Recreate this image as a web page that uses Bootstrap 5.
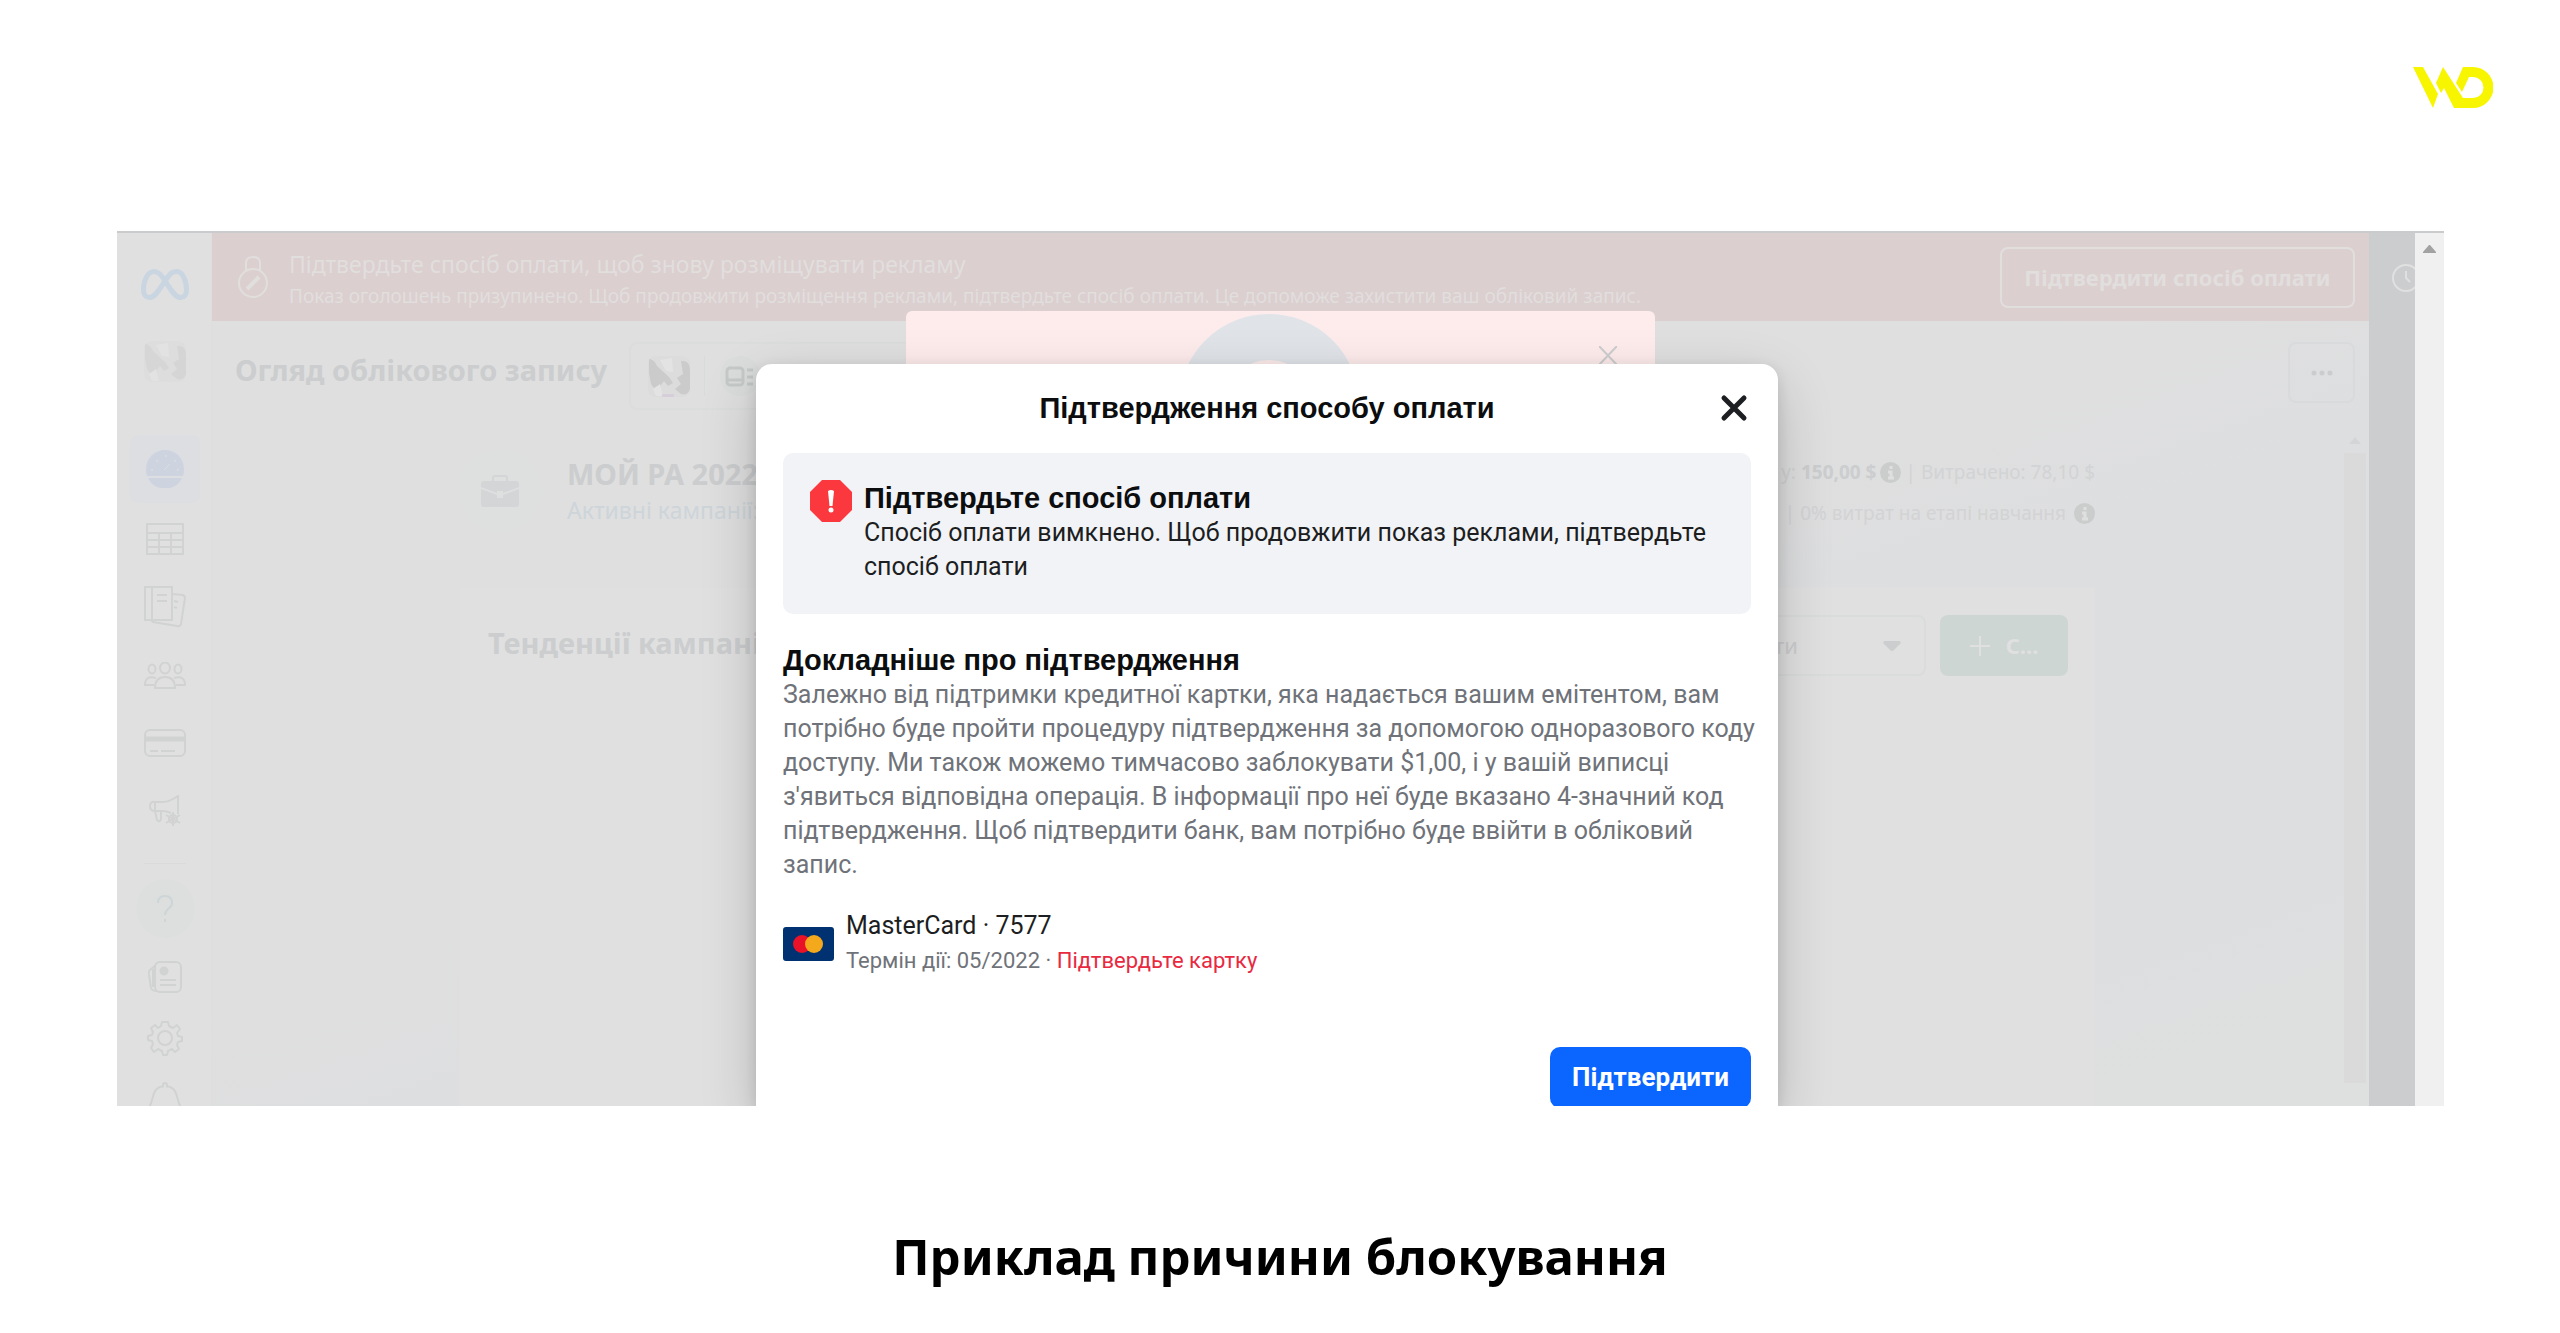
<!DOCTYPE html>
<html lang="uk">
<head>
<meta charset="utf-8">
<meta name="viewport" content="width=device-width, initial-scale=1">
<title>Приклад причини блокування</title>
<link href="https://cdn.jsdelivr.net/npm/bootstrap@5.3.0/dist/css/bootstrap.min.css" rel="stylesheet">
<style>
body{background:#fff;font-family:"Noto Sans",sans-serif;color:#cbcdce}
svg{display:block;flex:none}
.brandbar{padding:67px 67px 0;height:231px}
.shot{margin:0 116px 0 117px;display:grid;grid-template-columns:minmax(0,1fr);overflow:hidden;border-top:2px solid #c9cbcc}
.layer{grid-area:1/1;min-width:0}
.side{width:95px;flex:none;background:#e0e0e0;border-right:1px solid #dedede;padding-left:2px}
.side svg{fill:none;stroke:#d1d2d2;stroke-width:2}
.slot{display:flex;align-items:center;justify-content:center;width:95px;flex:none}
.slot-logo{height:102px}.slot-pic{height:52px;margin-bottom:48px}
.slot-on{width:70px;height:68px;border-radius:8px;background:#dddee1;margin-bottom:2px}
.slot-a{height:68px}.slot-b{height:61px}
.side-line{width:42px;height:1px;background:#dadada;margin:18px 0 15px}
.help{width:59px;height:59px;border-radius:50%;background:#dddfdf;margin-bottom:8px}
.bell{margin-top:14px}
.pane{background:linear-gradient(160deg,#dfdfdf 0 45%,#dddee0 62% 85%,#dee0df 95%)}
.notice{height:88px;background:#dccfcf;color:#e1dede;padding:0 14px 0 25px}
.notice-title{font-size:23px;line-height:30px;padding-top:7px}
.notice-text{font-size:19px;line-height:34px}
.btn-notice{height:61px;width:355px;border:2px solid #e1dede;border-radius:8px;color:#e1dede;font-size:22px;font-weight:700;padding:0}
.heading{font-size:29px;line-height:40px;font-weight:700;color:#cbcdce;margin:0}
.head-row{padding:21px 14px 0 23px;height:129px}
.picker{margin-left:22px;width:360px;height:68px;border:2px solid #dbdcdc;border-radius:8px;padding-left:17px}
.picker-line{width:1px;height:40px;background:#d9dada;margin:0 15px 0 14px}
.btn-more{width:67px;height:61px;border:2px solid #d9dadb;border-radius:8px;padding:0}
.body-row{padding-left:247px}
.summary{height:137px}
.case{width:82px;height:82px;border-radius:50%;background:#dde0df;margin-right:26px}
.acc-name{margin-top:4px}
.acc-sub{font-size:23px;line-height:32px;color:#cdd5da}
.stats{font-size:19px;line-height:41px;color:#d2d3d4;text-align:right;white-space:nowrap;padding-top:2px}
.stats b{color:#cbcdce}
.trend{background:#e0e0e0;padding:27px 26px 0 28px;border:1px solid #dfdfdf;border-bottom:0}
.pick{position:relative;width:190px;margin-right:14px}
.pick select{width:190px;height:61px;background:#e0e0e0;border:2px solid #dadbdb;border-radius:8px;color:#cbcdce;font-size:22px;padding:0 40px 0 36px;appearance:none;opacity:1}
.pick svg{position:absolute;right:25px;top:26px}
.btn-make{width:128px;height:61px;border-radius:8px;background:#cdd6d3;color:#e0e0e0;font-size:22px;font-weight:700;padding:0;border:0}
.gutter{width:274px;flex:none;padding:0 3px 23px 0}
.thumb{width:22px;flex:1;background:#dadada}
.tri{margin:-13px 5px 9px}
.strip{width:46px;background:#cccdcf;overflow:hidden;padding:31px 0 0 23px;flex:none}
.bar{width:29px;background:#f0f0f0;padding:12px 8px;flex:none}
.popup{width:749px;height:300px;margin:78px auto 0;background:#fdeceb;border-radius:6px;position:relative}
.popup .ring{position:absolute;left:272px;top:2px}
.popup .x-btn{position:absolute;left:693px;top:35px}
.plain{border:0;background:none;padding:0}
.modal-layer{padding:131px 27px 0 0}
.dlg{width:1022px;margin:0 auto;background:#fff;border-radius:16px 16px 0 0;box-shadow:0 20px 56px rgba(0,0,0,.19),0 4px 14px rgba(0,0,0,.12);padding:0 27px;position:relative;font-family:Roboto,sans-serif;color:#1c1e21;height:742px}
.dlg-head{height:89px;padding-top:26px}
.dlg-title{font-family:"Liberation Sans",Arial,sans-serif;font-size:29px;line-height:36px;font-weight:700;color:#0c0d0e;margin:0}
.dlg-head .plain{position:absolute;right:30px;top:30px}
.warn{background:#f2f3f7;border-radius:10px;padding:27px 27px 0;height:161px}
.warn-body{padding-left:12px}
.copy{font-size:25px;line-height:34px;margin:0}
.grey{color:#6f7379}
.more{padding-top:28px;margin-right:-16px}
.pay{margin-top:27px}
.sub{font-size:22px;line-height:36px}
.red{color:#e8293f}
.act{margin-top:68px}
.go{width:201px;height:61px;border-radius:10px;background:#0a66ff;color:#fff;font-size:26px;line-height:34px;font-weight:700;padding:0 0 2px;border:0;font-family:Roboto,sans-serif}
.caption{font-size:49px;line-height:70px;font-weight:700;color:#000;margin:0;padding-top:115px;text-align:center}
</style>
<script src="https://cdn.jsdelivr.net/npm/bootstrap@5.3.0/dist/js/bootstrap.bundle.min.js"></script>
</head>
<body>
<header class="brandbar d-flex justify-content-end">
<svg width="80" height="41" viewBox="0 0 80 41" fill="#f8f500" aria-label="WD"><path d="M0 0H10L25 27 20 41Z"/><path d="M30 0 50 31H60A10 10 0 0 0 60 10H56L49 25 43 16 50 0H60A20 20 0 0 1 60 41H41L31 21 28 26 23 16Z"/></svg>
</header>
<main>
<div class="shot">
<div class="layer d-flex">
<nav class="side d-flex flex-column align-items-center" aria-label="Меню">
<div class="slot slot-logo"><svg width="48" height="31" viewBox="0 0 48 31" style="stroke:#c9d5e1;stroke-width:5"><path d="M24 12C20 5 17 2.500 13 2.500 7 2.500 2.500 11 2.500 21 2.500 26 5 28.500 8.500 28.500 14 28.500 18 21 24 12S32 2.500 36 2.500C41 2.500 45.500 11 45.500 21 45.500 26 43 28.500 39.500 28.500 34 28.500 30 21 24 12Z"/></svg></div>
<div class="slot slot-pic"><svg width="42" height="41" viewBox="0 0 42 41" style="stroke:none"><rect width="42" height="41" rx="8" fill="#dedddd"/><path d="M1 3Q6 3 9 10L21 21 25 27 20 30 16 25 10 33Q6 34 3 28L1 17Z" fill="#d6d6d6"/><path d="M33 5Q42 4 42 14V33Q40 40 33 38L27 33 33 28 29 22 35 18Z" fill="#d5d5d6"/><path d="M12 4 24 2 25 16 18 15ZM5 33 12 28 15 40H8Z" fill="#e2e2e2"/></svg></div>
<div class="slot slot-on"><svg width="38" height="38" viewBox="0 0 38 38" style="stroke:none"><path d="M0 19A19 19 0 0 1 38 19Q38 23 37 26H1Q0 23 0 19Z" fill="#cdd4e0"/><path d="M2 28H36A19 19 0 0 1 2 28Z" fill="#cdd4e0"/><path d="M18 20 24 14" style="stroke:#dbdde1;stroke-width:1"/><g fill="#dbdde1"><circle cx="6" cy="20" r="1"/><circle cx="11" cy="11" r="1"/><circle cx="20" cy="6" r="1"/><circle cx="29" cy="11" r="1"/><circle cx="32" cy="20" r="1"/></g></svg></div>
<div class="slot slot-a"><svg width="38" height="32" viewBox="0 0 38 32"><path d="M1 1H37V31H1ZM1 10H37M1 17H37M1 24H37M13 10V31M25 10V31"/></svg></div>
<div class="slot slot-a"><svg width="42" height="42" viewBox="0 0 42 42"><path d="M1 1H28V34H1ZM8 1V34M13 9H23M13 15H23M28 8 39 9Q41 10 41 12L37 38Q36 41 33 40L9 36 7 34M30 15 34 16M30 21 33 22"/></svg></div>
<div class="slot slot-a"><svg width="42" height="27" viewBox="0 0 42 27"><ellipse cx="21" cy="6" rx="5" ry="5.500"/><ellipse cx="8" cy="7" rx="3.500" ry="4.500"/><ellipse cx="34" cy="7" rx="3.500" ry="4.500"/><path d="M11 26Q11 15 21 15T31 26ZM12 16Q1 13 1 23H10M30 16Q41 13 41 23H32"/></svg></div>
<div class="slot slot-a"><svg width="42" height="28" viewBox="0 0 42 28"><rect x="1" y="1" width="40" height="26" rx="5"/><path d="M1 10H41" style="stroke-width:5"/><path d="M6 22H14M17 22H31"/></svg></div>
<div class="slot slot-a"><svg width="32" height="32" viewBox="0 0 32 32"><path d="M6 7H14Q20 7 29 1V19M22 18Q17 16 14 16H6Q1 16 1 11T6 7V16L8 25Q11 28 12 24V16"/><path d="M24 17V31M17 20 31 28M31 20 17 28"/><circle cx="24" cy="24" r="4"/></svg></div>
<div class="side-line"></div>
<div class="help d-flex align-items-center justify-content-center"><svg width="18" height="27" viewBox="0 0 18 27" style="stroke:#cdd5d6"><path d="M2 8Q2 1 9 1T16 8C16 14 9 13 9 20M9 24V27"/></svg></div>
<div class="slot slot-b"><svg width="34" height="32" viewBox="0 0 34 32"><rect x="7" y="1" width="26" height="30" rx="5"/><path d="M8 4 2 9Q0 11 1 14L3 27Q4 30 9 30M5 8V26M12 19H28M12 24H28"/><circle cx="16" cy="10" r="3.500" fill="#d1d2d2"/></svg></div>
<div class="slot slot-b"><svg width="36" height="36" viewBox="0 0 36 36"><path d="M15 2H21L22 6 26 8 30 5 33 9 30 13 31 16 35 17V21L31 22 30 25 32 29 28 32 25 29 21 31 20 35H16L15 31 11 29 7 32 4 28 6 24 5 21 1 20V16L5 15 6 12 4 8 8 5 11 8 14 6Z" stroke-linejoin="round"/><circle cx="18" cy="18" r="7"/></svg></div>
<svg class="bell" width="34" height="24" viewBox="0 0 34 24"><path d="M1 26C6 17 4 5 15 4.500V3A2 2 0 0 1 19 3V4.500C30 5 28 17 33 26"/></svg>
</nav>
<div class="pane flex-grow-1 d-flex flex-column layer">
<div class="notice d-flex align-items-center">
<svg width="32" height="42" viewBox="0 0 32 42" fill="none" stroke="#e1dede" stroke-width="2" class="me-3"><circle cx="16" cy="27" r="14"/><path d="M9 14V7Q9 1 16 1T23 7V14"/><path d="M10 33 22 21" stroke-width="4"/></svg>
<div class="flex-grow-1 ps-1"><div class="notice-title">Підтвердьте спосіб оплати, щоб знову розміщувати рекламу</div><div class="notice-text">Показ оголошень призупинено. Щоб продовжити розміщення реклами, підтвердьте спосіб оплати. Це допоможе захистити ваш обліковий запис.</div></div>
<button class="btn btn-notice" type="button">Підтвердити спосіб оплати</button>
</div>
<div class="head-row d-flex align-items-start">
<h1 class="heading pt-2">Огляд облікового запису</h1>
<div class="picker d-flex align-items-center"><svg width="42" height="41" viewBox="0 0 42 41"><rect width="42" height="41" rx="8" fill="#dcdcdc"/><path d="M1 3Q6 3 9 10L21 21 25 27 20 30 16 25 10 33Q6 34 3 28L1 17Z" fill="#cbcbcb"/><path d="M33 5Q42 4 42 14V33Q40 40 33 38L27 33 33 28 29 22 35 18Z" fill="#cbcbcc"/><path d="M12 4 24 2 25 16 18 15ZM5 33 12 28 15 40H8Z" fill="#e3e3e3"/><path d="M14 38H26V41H14Z" fill="#d6ced8"/></svg><span class="picker-line"></span><svg width="40" height="40" viewBox="0 0 40 40" fill="none" stroke="#c5c9c8" stroke-width="3"><circle cx="20" cy="20" r="20" fill="#dadddc" stroke="none"/><rect x="7" y="12" width="16" height="17" rx="3"/><path d="M7 24H23M27 14H33M27 21H33M27 28H33"/></svg></div>
<button class="btn btn-more ms-auto d-flex align-items-center justify-content-center" type="button" aria-label="Більше"><svg width="22" height="6" viewBox="0 0 22 6" fill="#cbccce"><circle cx="3" cy="3" r="2.500"/><circle cx="11" cy="3" r="2.500"/><circle cx="19" cy="3" r="2.500"/></svg></button>
</div>
<div class="body-row d-flex flex-grow-1">
<div class="flex-grow-1 d-flex flex-column">
<div class="summary d-flex align-items-start">
<div class="case d-flex align-items-center justify-content-center"><svg width="38" height="32" viewBox="0 0 38 32" fill="#d3d5d7"><path d="M12 6V3Q12 1 14 1H24Q26 1 26 3V6" fill="none" stroke="#d3d5d7" stroke-width="2"/><path d="M3 6H35Q38 6 38 9V12L22 18V16H16V18L0 12V9Q0 6 3 6Z"/><path d="M0 14 16 20V23H22V20L38 14V29Q38 32 35 32H3Q0 32 0 29Z"/></svg></div>
<div><h2 class="heading acc-name">МОЙ РА 2022</h2><div class="acc-sub">Активні кампанії:</div></div>
<div class="stats ms-auto"><div class="d-flex align-items-center justify-content-end">у:&nbsp;<b>150,00 $</b><svg class="ms-1 me-1" width="21" height="21" viewBox="0 0 21 21"><circle cx="10.500" cy="10.500" r="10.500" fill="#cbcdcd"/><path d="M11 4V7M8 10H11V16M8 16H14" stroke="#dfdfdf" stroke-width="3" fill="none"/></svg>| Витрачено: 78,10 $</div>
<div class="d-flex align-items-center justify-content-end"><svg class="me-2" width="21" height="21" viewBox="0 0 21 21"><circle cx="10.500" cy="10.500" r="10.500" fill="#cbcdcd"/></svg>| 0% витрат на етапі навчання<svg class="ms-2" width="21" height="21" viewBox="0 0 21 21"><circle cx="10.500" cy="10.500" r="10.500" fill="#cbcdcd"/><path d="M11 4V7M8 10H11V16M8 16H14" stroke="#dfdfdf" stroke-width="3" fill="none"/></svg></div></div>
</div>
<section class="trend d-flex align-items-start flex-grow-1">
<h2 class="heading pt-2 me-auto">Тенденції кампанії</h2>
<div class="pick"><select aria-label="Дія"><option>ти</option></select><svg width="18" height="10" viewBox="0 0 18 10"><path d="M1 0H17L18 2 11 9Q9 11 7 9L0 2Z" fill="#cbcdce"/></svg></div>
<button class="btn btn-make d-flex align-items-center justify-content-center" type="button"><svg class="me-3" width="20" height="20" viewBox="0 0 20 20" stroke="#e0e0e0" stroke-width="2"><path d="M10 0V20M0 10H20"/></svg>С...</button>
</section>
</div>
<div class="gutter d-flex flex-column align-items-end"><svg class="tri" width="12" height="7" viewBox="0 0 12 7"><path d="M6 0 12 7H0Z" fill="#d4d5d6"/></svg><div class="thumb"></div></div>
</div>
</div>
<div class="strip"><svg width="28" height="28" viewBox="0 0 28 28" fill="none" stroke="#e0e0e0" stroke-width="2"><circle cx="14" cy="14" r="13"/><path d="M14 7V14L18 18"/></svg></div>
<div class="bar"><svg width="13" height="8" viewBox="0 0 13 8"><path d="M6 0H7L13 7V8H0V7Z" fill="#a2a2a2"/></svg></div>
</div>
<div class="layer"><div class="popup"><svg class="ring" width="182" height="182" viewBox="0 0 182 182"><circle cx="91" cy="91" r="67" fill="none" stroke="#e0e4e9" stroke-width="46"/></svg><button class="plain x-btn" type="button" aria-label="Закрити"><svg width="18" height="19" viewBox="0 0 18 19" stroke="#cdcdcf" stroke-width="2"><path d="M0 0 18 19M18 0 0 19"/></svg></button></div></div>
<div class="layer modal-layer">
<div class="dlg" role="dialog" aria-labelledby="dlg-t">
<div class="dlg-head text-center"><h2 class="dlg-title" id="dlg-t">Підтвердження способу оплати</h2><button class="plain" type="button" aria-label="Закрити"><svg width="28" height="28" viewBox="0 0 28 28" stroke="#1c1e21" stroke-width="5" stroke-linecap="round"><path d="M4 4 24 24M24 4 4 24"/></svg></button></div>
<div class="warn d-flex align-items-start"><svg width="42" height="42" viewBox="0 0 42 42"><path d="M12 0H30L42 12V30L30 42H12L0 30V12Z" fill="#fa383e"/><path d="M18 11Q21 9 24 11L22.500 26H19.500Z" fill="#fff"/><circle cx="21" cy="30" r="2.500" fill="#fff"/></svg>
<div class="warn-body"><h3 class="dlg-title">Підтвердьте спосіб оплати</h3><p class="copy">Спосіб оплати вимкнено. Щоб продовжити показ реклами, підтвердьте спосіб оплати</p></div></div>
<div class="more"><h3 class="dlg-title">Докладніше про підтвердження</h3><p class="copy grey">Залежно від підтримки кредитної картки, яка надається вашим емітентом, вам потрібно буде пройти процедуру підтвердження за допомогою одноразового коду доступу. Ми також можемо тимчасово заблокувати $1,00, і у вашій виписці з'явиться відповідна операція. В інформації про неї буде вказано 4-значний код підтвердження. Щоб підтвердити банк, вам потрібно буде ввійти в обліковий запис.</p></div>
<div class="pay d-flex align-items-center"><svg width="51" height="34" viewBox="0 0 51 34" class="me-2"><rect width="51" height="34" rx="3" fill="#003272"/><circle cx="19" cy="17" r="9" fill="#ea1228"/><circle cx="31" cy="17" r="9" fill="#f4a81c"/></svg><div class="ms-1"><div class="copy">MasterCard · 7577</div><div class="sub grey">Термін дії: 05/2022 · <span class="red">Підтвердьте картку</span></div></div></div>
<div class="act d-flex justify-content-end"><button class="btn go" type="button">Підтвердити</button></div>
</div>
</div>
</div>
<h2 class="caption">Приклад причини блокування</h2>
</main>
</body>
</html>
